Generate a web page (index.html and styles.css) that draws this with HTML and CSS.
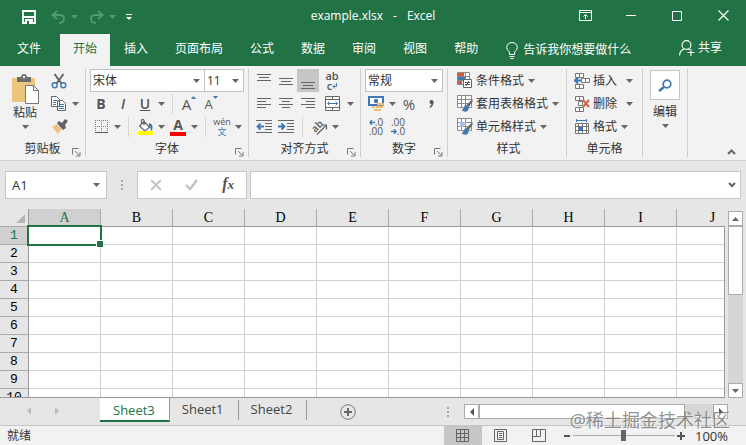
FILE: index.html
```
<!DOCTYPE html>
<html lang="zh-CN">
<head>
    <meta charset="utf-8">
    <meta name="viewport" content="width=device-width, initial-scale=1">
    <title>example.xlsx - Excel</title>
    <link rel="stylesheet" href="styles.css">
</head>
<body>
<svg class="defs" aria-hidden="true">
    <symbol id="caret" viewBox="0 0 7 4"><path d="M0 0h7L3.500 4z" fill="currentColor"/></symbol>
    <symbol id="launch" viewBox="0 0 9 9"><path d="M.5 6.500V.5H6.500M3 3l4 4M8 4v4H4" fill="none" stroke="#777"/></symbol>
    <symbol id="brush" viewBox="0 0 17 17"><path d="M1.500.5h14v12h-14zM1.500 4.500h14M1.500 8.500h14M5.500.5v12M9.500.5v12" fill="#fff" stroke="#8a8a8a"/><path d="M16.500 4l-6 6 2 2.500 4-6z" fill="#666"/><path d="M10.500 10c-3 0-2 4-5 5 3 3 8 2 7-2.500z" fill="#3f78b5"/></symbol>
</svg>

<header class="titlebar">
    <div class="quick">
        <button class="q-btn" aria-label="保存"><svg width="14" height="14" viewBox="0 0 14 14"><path d="M1 1h12v12H1zM1 7h12" fill="none" stroke="#fff" stroke-width="1.800"/><path d="M3 9h8v5H3z" fill="#fff"/><path d="M5 11h2v3H5z" fill="#217346"/></svg></button>
        <button class="q-btn faded" aria-label="撤消"><svg width="15" height="14" viewBox="0 0 15 14"><path d="M6 1L1.500 5 6 9M2 5h7c6 0 5 8-1 8" fill="none" stroke="currentColor" stroke-width="2"/></svg></button>
        <svg class="caret faded"><use href="#caret"/></svg>
        <button class="q-btn faded" aria-label="恢复"><svg width="15" height="14" viewBox="0 0 15 14"><path d="M9 1l4.500 4L9 9M13 5H6c-6 0-5 8 1 8" fill="none" stroke="currentColor" stroke-width="2"/></svg></button>
        <svg class="caret faded"><use href="#caret"/></svg>
        <button class="q-btn" aria-label="自定义"><svg width="6" height="7" viewBox="0 0 6 7"><path d="M0 0h6v1H0zM0 3h6L3 6z" fill="#fff"/></svg></button>
    </div>
    <div class="doc-name"><span>example.xlsx</span><span>-</span><span>Excel</span></div>
    <div class="win-btns">
        <button aria-label="功能区显示选项"><svg width="13" height="11" viewBox="0 0 13 11"><path d="M.5.5h12v10H.5zM.5 2.500h12M6.500 9V4.500M4.500 6.500l2-2 2 2" fill="none" stroke="#fff"/></svg></button>
        <button aria-label="最小化"><svg width="10" height="10" viewBox="0 0 10 10"><path d="M0 4.500h10" stroke="#fff"/></svg></button>
        <button aria-label="最大化"><svg width="10" height="10" viewBox="0 0 10 10"><path d="M.5.5h9v9h-9z" fill="none" stroke="#fff"/></svg></button>
        <button aria-label="关闭"><svg width="11" height="11" viewBox="0 0 11 11"><path d="M.5.5l10 10M10.500.5l-10 10" stroke="#fff" stroke-width="1.200"/></svg></button>
    </div>
</header>

<nav class="menu">
    <a class="tab file" href="#">文件</a>
    <a class="tab active" href="#">开始</a>
    <a class="tab" href="#">插入</a>
    <a class="tab" href="#">页面布局</a>
    <a class="tab" href="#">公式</a>
    <a class="tab" href="#">数据</a>
    <a class="tab" href="#">审阅</a>
    <a class="tab" href="#">视图</a>
    <a class="tab" href="#">帮助</a>
    <a class="tell" href="#"><svg width="12" height="17" viewBox="0 0 12 17"><path d="M3.500 12.500V11C3.500 9 .7 8 .7 5.500a5.300 5 0 0 1 10.600 0C11.300 8 8.500 9 8.500 11v1.500zM3.500 14.500h5M4.500 16.500h3" fill="none" stroke="#fff"/></svg>告诉我你想要做什么</a>
    <a class="share" href="#"><svg width="16" height="16" viewBox="0 0 16 16"><circle cx="7.500" cy="5" r="4.400" fill="none" stroke="#fff" stroke-width="1.100"/><path d="M.6 15.500c0-3 1.500-5.500 4.500-6.500M9.500 9l1 1M12 9v7M8.500 12.500h7" fill="none" stroke="#fff" stroke-width="1.100"/></svg>共享</a>
</nav>

<section class="ribbon">
    <div class="group">
        <div class="tools cols">
            <button class="big">
                <svg width="30" height="32" viewBox="0 0 30 32"><path d="M2 5h23v24H2z" fill="#edc57e"/><path d="M7 9V4h4c0-4 6-4 6 0h4v5z" fill="#6b6b6b"/><circle cx="14" cy="4" r="1.200" fill="#fff"/><path d="M15.500 12.500h8l5 5v13h-13z" fill="#fff" stroke="#777"/><path d="M23.500 12.500v5h5" fill="none" stroke="#777"/></svg>
                <span>粘贴</span>
                <svg class="caret"><use href="#caret"/></svg>
            </button>
            <div class="stack">
                <div class="row"><button class="ico" aria-label="剪切"><svg width="16" height="16" viewBox="0 0 16 16"><path d="M3.500 1l7 9.500M12.500 1l-7 9.500" stroke="#666" stroke-width="2"/><circle cx="3.700" cy="12.300" r="2.500" fill="none" stroke="#3f78b5" stroke-width="1.400"/><circle cx="12.300" cy="12.300" r="2.500" fill="none" stroke="#3f78b5" stroke-width="1.400"/></svg></button></div>
                <div class="row"><button class="ico" aria-label="复制"><svg width="16" height="15" viewBox="0 0 16 15"><path d="M.5.5h5l3 3v7h-8zM6.500 4.500h5l3 3v7h-8z" fill="#fff" stroke="#666"/><path d="M2 4.500h4M2 6.500h3M2 8.500h3M8 8.500h5M8 10.500h5M8 12.500h5" stroke="#3f78b5"/></svg></button><svg class="caret"><use href="#caret"/></svg></div>
                <div class="row"><button class="ico" aria-label="格式刷"><svg width="17" height="15" viewBox="0 0 17 15"><path d="M1 8l5-3 5 5-4 5z" fill="#edc08a"/><path d="M6 4l2-2 3 2 3-4 3 2-3 4 1 3-3 2z" fill="#606060"/></svg></button></div>
            </div>
        </div>
        <div class="label">剪贴板<svg class="launch"><use href="#launch"/></svg></div>
    </div>

    <div class="group">
        <div class="tools">
            <div class="row">
                <div class="pick font-name"><select aria-label="字体"><option>宋体</option></select><svg class="caret"><use href="#caret"/></svg></div>
                <div class="pick font-size"><select aria-label="字号"><option>11</option></select><svg class="caret"><use href="#caret"/></svg></div>
            </div>
            <div class="row">
                <button class="ico"><b>B</b></button>
                <button class="ico"><i>I</i></button>
                <button class="ico"><u>U</u></button>
                <svg class="caret"><use href="#caret"/></svg>
                <span class="sep"></span>
                <button class="ico grow">A<svg width="5" height="3" viewBox="0 0 5 3"><path d="M0 3h5L2.500 0z" fill="#3f78b5"/></svg></button>
                <button class="ico shrink">A<svg width="5" height="3" viewBox="0 0 5 3"><path d="M0 0h5L2.500 3z" fill="#3f78b5"/></svg></button>
            </div>
            <div class="row">
                <button class="ico" aria-label="边框"><svg width="13" height="13" viewBox="0 0 13 13"><path d="M.5 0v12M6.500 0v12M12.500 0v12M0 .5h13M0 6.500h13" stroke="#777" stroke-dasharray="1 1"/><path d="M0 12.500h13" stroke="#555"/></svg></button>
                <svg class="caret"><use href="#caret"/></svg>
                <span class="sep"></span>
                <button class="ico" aria-label="填充颜色"><svg width="17" height="16" viewBox="0 0 17 16"><path d="M7 2.500l5.500 5.500-4.500 4-5.500-5zM7 6V1.500c0-1.500-2.500-1.500-2.500 0V5" fill="#fff" stroke="#666" stroke-width="1.200"/><path d="M12 4c4 1 4 4 3 8-2-1-1-4-3-5z" fill="#3f78b5"/><path d="M1 12h15v4H1z" fill="#ff0"/></svg></button>
                <svg class="caret"><use href="#caret"/></svg>
                <button class="ico color">A</button>
                <svg class="caret"><use href="#caret"/></svg>
                <span class="sep"></span>
                <button class="ico pinyin"><span>wén</span><span class="wen">文</span></button>
                <svg class="caret"><use href="#caret"/></svg>
            </div>
        </div>
        <div class="label">字体<svg class="launch"><use href="#launch"/></svg></div>
    </div>

    <div class="group">
        <div class="tools">
            <div class="row">
                <button class="ico" aria-label="顶端对齐"><svg width="14" height="16" viewBox="0 0 14 16"><path d="M0 1.500h14M2 4.500h10M0 7.500h14" stroke="#666"/></svg></button>
                <button class="ico" aria-label="垂直居中"><svg width="14" height="16" viewBox="0 0 14 16"><path d="M0 5.500h14M2 8.500h10M0 11.500h14" stroke="#666"/></svg></button>
                <button class="ico on" aria-label="底端对齐"><svg width="14" height="16" viewBox="0 0 14 16"><path d="M0 9.500h14M2 12.500h10M0 15.500h14" stroke="#666"/></svg></button>
                <button class="ico wide wrap"><span>ab</span><span>c<svg width="5" height="6" viewBox="0 0 5 6"><path d="M4.500 0v3.500H1M3 1.500l-2 2 2 2" fill="none" stroke="#3f78b5"/></svg></span></button>
            </div>
            <div class="row">
                <button class="ico" aria-label="左对齐"><svg width="14" height="12" viewBox="0 0 14 12"><path d="M0 .5h14M0 3.500h9M0 6.500h14M0 9.500h9" stroke="#666"/></svg></button>
                <button class="ico" aria-label="居中"><svg width="14" height="12" viewBox="0 0 14 12"><path d="M0 .5h14M3 3.500h8M0 6.500h14M3 9.500h8" stroke="#666"/></svg></button>
                <button class="ico" aria-label="右对齐"><svg width="14" height="12" viewBox="0 0 14 12"><path d="M0 .5h14M5 3.500h9M0 6.500h14M5 9.500h9" stroke="#666"/></svg></button>
                <button class="ico wide" aria-label="合并后居中"><svg width="15" height="15" viewBox="0 0 15 15"><path d="M.5.5h14v14H.5zM.5 3.500h14M.5 11.500h14M7.500.5v3M7.500 11.500v3" fill="#fff" stroke="#666"/><path d="M3 7.500h9M4.500 5.500l-2 2 2 2M10.500 5.500l2 2-2 2" fill="none" stroke="#3f78b5"/></svg></button>
                <svg class="caret"><use href="#caret"/></svg>
            </div>
            <div class="row">
                <button class="ico" aria-label="减少缩进"><svg width="16" height="13" viewBox="0 0 16 13"><path d="M0 .5h16M9 3.500h7M9 6.500h7M9 9.500h7M0 12.500h16" stroke="#666"/><path d="M8 6.500H2M4.500 3.500l-3 3 3 3" fill="none" stroke="#3f78b5" stroke-width="1.800"/></svg></button>
                <button class="ico" aria-label="增加缩进"><svg width="16" height="13" viewBox="0 0 16 13"><path d="M0 .5h16M9 3.500h7M9 6.500h7M9 9.500h7M0 12.500h16" stroke="#666"/><path d="M0 6.500h6M3.500 3.500l3 3-3 3" fill="none" stroke="#3f78b5" stroke-width="1.800"/></svg></button>
                <span class="sep"></span>
                <button class="ico" aria-label="方向"><svg class="turn" width="17" height="16" viewBox="0 0 17 16"><text class="slant" x="1" y="12" transform="rotate(-45 5 9)">ab</text><path d="M6 15.500l9-9M11 6h4.500v4.500" fill="none" stroke="#666" stroke-width="1.200"/></svg></button>
                <svg class="caret"><use href="#caret"/></svg>
            </div>
        </div>
        <div class="label">对齐方式<svg class="launch"><use href="#launch"/></svg></div>
    </div>

    <div class="group">
        <div class="tools">
            <div class="row">
                <div class="pick num"><select aria-label="数字格式"><option>常规</option></select><svg class="caret"><use href="#caret"/></svg></div>
            </div>
            <div class="row">
                <button class="ico" aria-label="会计数字格式"><svg width="17" height="17" viewBox="0 0 17 17"><path d="M1 2h14v8H1z" fill="#fff" stroke="#3f78b5" stroke-width="2"/><circle cx="8" cy="6" r="2.200" fill="#3f78b5"/><path d="M9 8h7v2.500H9zM8 11h7v2H8zM6 14h7v2H6zM4 11h3v2H4z" fill="#e8bd72"/></svg></button>
                <svg class="caret"><use href="#caret"/></svg>
                <button class="ico percent">%</button>
                <button class="ico comma" aria-label="千位分隔样式"><svg width="5" height="8" viewBox="0 0 5 8"><circle cx="2.500" cy="2" r="2" fill="#555"/><path d="M4.500 2q0 4-3.500 6l-.5-1Q3 5 2.500 3z" fill="#555"/></svg></button>
            </div>
            <div class="row">
                <button class="ico dec"><span><svg width="6" height="5" viewBox="0 0 6 5"><path d="M6 2.500H1M3 0L.8 2.500 3 5" fill="none" stroke="#3f78b5" stroke-width="1.300"/></svg>.0</span><span>.00</span></button>
                <button class="ico dec"><span>.00</span><span><svg width="6" height="5" viewBox="0 0 6 5"><path d="M0 2.500h5M3 0l2.200 2.500L3 5" fill="none" stroke="#3f78b5" stroke-width="1.300"/></svg>.0</span></button>
            </div>
        </div>
        <div class="label">数字<svg class="launch"><use href="#launch"/></svg></div>
    </div>

    <div class="group styles">
        <div class="tools">
            <div class="row"><button class="line"><svg width="17" height="17" viewBox="0 0 17 17"><path d="M1.500.5h12v12h-12zM1.500 4.500h12M1.500 8.500h12M5.500.5v12M9.500.5v12" fill="#fff" stroke="#8a8a8a"/><path d="M2 1h6v3H2zM2 9h4v3H2z" fill="#d3573a"/><path d="M2 5h7v3H2z" fill="#3f78b5"/><path d="M7.500 7.500h8v8h-8z" fill="#fff" stroke="#666"/><path d="M9 10.500h5M9 12.500h5M13 9l-3 5" stroke="#555"/></svg>条件格式<svg class="caret"><use href="#caret"/></svg></button></div>
            <div class="row"><button class="line"><svg width="17" height="17"><use href="#brush"/></svg>套用表格格式<svg class="caret"><use href="#caret"/></svg></button></div>
            <div class="row"><button class="line"><svg width="17" height="17" viewBox="0 0 17 17"><use href="#brush"/><path d="M4 4h7l-4 5H4z" fill="#a9c3e6"/></svg>单元格样式<svg class="caret"><use href="#caret"/></svg></button></div>
        </div>
        <div class="label">样式</div>
    </div>

    <div class="group cells">
        <div class="tools">
            <div class="row"><button class="line split"><svg width="16" height="16" viewBox="0 0 16 16"><path d="M1.500.5h8v4h-8zM5.500.5v4M1.500 11.500h8v4h-8zM5.500 11.500v4M7.500 5.500h8v4h-8zM11.500 5.500v4" fill="#fff" stroke="#777"/><path d="M7 7.500H1M4 4.500l-3 3 3 3" fill="none" stroke="#3f78b5" stroke-width="2"/></svg>插入<svg class="caret"><use href="#caret"/></svg></button></div>
            <div class="row"><button class="line split"><svg width="16" height="16" viewBox="0 0 16 16"><path d="M1.500.5h8v4h-8zM5.500.5v4M1.500 11.500h8v4h-8zM5.500 11.500v4M4.500 5.500h4v4h-4z" fill="#fff" stroke="#777"/><path d="M9 4l6 7M15 4l-6 7" stroke="#d9604a" stroke-width="2"/></svg>删除<svg class="caret"><use href="#caret"/></svg></button></div>
            <div class="row"><button class="line"><svg width="16" height="16" viewBox="0 0 16 16"><path d="M1.500 4.500h13v10h-13zM1.500 7.500h13M1.500 11.500h13M4.500 4.500v10M8.500 4.500v10M12.500 4.500v10" fill="#fff" stroke="#777"/><path d="M5 8h4v4H5z" fill="#3f78b5"/><path d="M3 1.500h9M2.500 0v3M12.500 0v3" stroke="#3f78b5"/></svg>格式<svg class="caret"><use href="#caret"/></svg></button></div>
        </div>
        <div class="label">单元格</div>
    </div>

    <div class="group edit">
        <button class="big">
            <span class="tile"><svg width="14" height="13" viewBox="0 0 14 13"><circle cx="9" cy="5" r="3.800" fill="none" stroke="#3f78b5" stroke-width="1.700"/><path d="M6 8l-5 4" stroke="#3f78b5" stroke-width="2.500"/></svg></span>
            <span>编辑</span>
            <svg class="caret"><use href="#caret"/></svg>
        </button>
    </div>
    <button class="collapse" aria-label="折叠功能区"><svg width="9" height="6" viewBox="0 0 9 6"><path d="M1 5l3.500-3.500L8 5" fill="none" stroke="#666" stroke-width="2"/></svg></button>
</section>

<section class="formula">
    <div class="name-box"><input aria-label="名称框" value="A1"><svg class="caret"><use href="#caret"/></svg></div>
    <span class="dots"></span>
    <div class="fx">
        <button aria-label="取消"><svg width="12" height="12" viewBox="0 0 12 12"><path d="M1 1l10 10M11 1L1 11" stroke="#c2c2c2" stroke-width="1.800"/></svg></button>
        <button aria-label="输入"><svg width="13" height="12" viewBox="0 0 13 12"><path d="M1 6l4 4 7-9" fill="none" stroke="#c2c2c2" stroke-width="2.400"/></svg></button>
        <button class="fx-name"><i>f<small>x</small></i></button>
    </div>
    <div class="entry"><input aria-label="编辑栏"><svg width="8" height="6" viewBox="0 0 8 6"><path d="M1 1l3 3 3-3" fill="none" stroke="#666" stroke-width="2"/></svg></div>
</section>

<main class="sheet">
    <div class="grid">
        <table>
            <thead>
                <tr><th class="corner"><svg width="9" height="9" viewBox="0 0 9 9"><path d="M9 0v9H0z" fill="#b5b5b5"/></svg></th><th class="cur">A</th><th>B</th><th>C</th><th>D</th><th>E</th><th>F</th><th>G</th><th>H</th><th>I</th><th>J</th></tr>
            </thead>
            <tbody>
                <tr><th class="cur">1</th><td class="picked"></td><td></td><td></td><td></td><td></td><td></td><td></td><td></td><td></td><td></td></tr>
                <tr><th>2</th><td></td><td></td><td></td><td></td><td></td><td></td><td></td><td></td><td></td><td></td></tr>
                <tr><th>3</th><td></td><td></td><td></td><td></td><td></td><td></td><td></td><td></td><td></td><td></td></tr>
                <tr><th>4</th><td></td><td></td><td></td><td></td><td></td><td></td><td></td><td></td><td></td><td></td></tr>
                <tr><th>5</th><td></td><td></td><td></td><td></td><td></td><td></td><td></td><td></td><td></td><td></td></tr>
                <tr><th>6</th><td></td><td></td><td></td><td></td><td></td><td></td><td></td><td></td><td></td><td></td></tr>
                <tr><th>7</th><td></td><td></td><td></td><td></td><td></td><td></td><td></td><td></td><td></td><td></td></tr>
                <tr><th>8</th><td></td><td></td><td></td><td></td><td></td><td></td><td></td><td></td><td></td><td></td></tr>
                <tr><th>9</th><td></td><td></td><td></td><td></td><td></td><td></td><td></td><td></td><td></td><td></td></tr>
                <tr><th>10</th><td></td><td></td><td></td><td></td><td></td><td></td><td></td><td></td><td></td><td></td></tr>
            </tbody>
        </table>
    </div>
    <div class="vscroll">
        <button aria-label="向上滚动"><svg class="up"><use href="#caret"/></svg></button>
        <div class="track"><div class="thumb"></div></div>
        <button aria-label="向下滚动"><svg><use href="#caret"/></svg></button>
    </div>
</main>

<div class="sheets">
    <div class="arrows">
        <button aria-label="上一个工作表"><svg width="4" height="8" viewBox="0 0 4 8"><path d="M4 0v8L0 4z" fill="#bbb"/></svg></button>
        <button aria-label="下一个工作表"><svg width="4" height="8" viewBox="0 0 4 8"><path d="M0 0v8l4-4z" fill="#bbb"/></svg></button>
    </div>
    <a class="sheet-tab open" href="#">Sheet3</a>
    <a class="sheet-tab" href="#">Sheet1</a>
    <a class="sheet-tab" href="#">Sheet2</a>
    <button class="add" aria-label="新工作表"><svg width="16" height="16" viewBox="0 0 16 16"><circle cx="8" cy="8" r="7.300" fill="none" stroke="#777"/><path d="M8 4v8M4 8h8" stroke="#666" stroke-width="2"/></svg></button>
    <span class="dots"></span>
    <div class="hscroll">
        <button aria-label="向左滚动"><svg width="4" height="8" viewBox="0 0 4 8"><path d="M4 0v8L0 4z" fill="#555"/></svg></button>
        <div class="track"><div class="thumb"></div></div>
        <button aria-label="向右滚动"><svg width="4" height="8" viewBox="0 0 4 8"><path d="M0 0v8l4-4z" fill="#555"/></svg></button>
    </div>
</div>

<footer class="status">
    <span class="ready">就绪</span>
    <div class="views">
        <button class="view on" aria-label="普通"><svg width="13" height="13" viewBox="0 0 13 13"><path d="M.5.5h12v12H.5zM.5 4.500h12M.5 8.500h12M4.500.5v12M8.500.5v12" fill="none" stroke="#666"/></svg></button>
        <button class="view" aria-label="页面布局"><svg width="13" height="13" viewBox="0 0 13 13"><path d="M.5.5h12v12H.5zM3.500 2.500h6v8h-6zM5 4.500h3M5 6.500h3M5 8.500h3" fill="none" stroke="#666"/></svg></button>
        <button class="view" aria-label="分页预览"><svg width="14" height="13" viewBox="0 0 14 13"><path d="M.5.5h13v12H.5zM4.500.5v7M8.500.5v7M.5 7.500h8" fill="none" stroke="#666"/></svg></button>
    </div>
    <button class="step" aria-label="缩小"><svg width="8" height="8" viewBox="0 0 8 8"><path d="M1 4h6" stroke="#555" stroke-width="2"/></svg></button>
    <input class="zoom" type="range" min="0" max="100" value="50" aria-label="缩放">
    <button class="step" aria-label="放大"><svg width="8" height="8" viewBox="0 0 8 8"><path d="M0 4h8M4 0v8" stroke="#555" stroke-width="2"/></svg></button>
    <span class="pct">100%</span>
</footer>
<div class="mark">@稀土掘金技术社区</div>
</body>
</html>
```

FILE: styles.css
```
*{
    box-sizing: border-box;
}
body{
    margin: 0;
    height: 100vh;
    display: flex;
    flex-direction: column;
    position: relative;
    overflow: hidden;
    background-color: #e6e6e6;
    color: #333;
    font-family: "Open Sans", "Noto Sans CJK SC", sans-serif;
    font-size: 12px;
    line-height: 16px;
}
button, input, select{
    font: inherit;
    color: inherit;
    background: none;
    border: none;
    padding: 0;
    margin: 0;
    outline: none;
    border-radius: 0;
}
button{
    display: flex;
    align-items: center;
    justify-content: center;
}
a{
    color: inherit;
    text-decoration: none;
}
svg{
    flex: none;
    display: block;
}
.defs{
    width: 0;
    height: 0;
    position: absolute;
}
.caret{
    width: 11px;
    height: 4px;
    color: #666;
}

/* title bar */
.titlebar{
    height: 34px;
    flex: none;
    display: grid;
    grid-template-columns: 1fr auto 1fr;
    background-color: #217346;
    color: #fff;
}
.quick{
    display: flex;
    align-items: center;
    padding-left: 18px;
}
.q-btn{
    width: 22px;
    height: 24px;
    margin-right: 2px;
}
.q-btn.faded{
    margin: 0 0 0 5px;
}
.faded{
    color: #4f9a70;
}
.doc-name{
    display: flex;
    gap: 10px;
    line-height: 32px;
}
.win-btns{
    display: flex;
    justify-content: flex-end;
}
.win-btns button{
    width: 46px;
    height: 31px;
}

/* menu tabs */
.menu{
    height: 32px;
    flex: none;
    display: flex;
    gap: 1px;
    padding: 0 24px 0 4px;
    background-color: #217346;
    color: #fff;
    line-height: 30px;
}
.tab{
    padding: 0 13px;
}
.tab.file{
    margin-right: 5px;
}
.tab.active{
    background-color: #f2f2f2;
    color: #217346;
}
.tell, .share{
    display: flex;
    align-items: center;
    gap: 5px;
}
.tell{
    margin-left: 14px;
}
.share{
    margin-left: auto;
    gap: 3px;
    line-height: 28px;
    align-self: flex-start;
}

/* ribbon */
.ribbon{
    height: 95px;
    flex: none;
    display: flex;
    padding-top: 3px;
    background-color: #f2f2f2;
    border-bottom: 1px solid #cfcfcf;
}
.group{
    display: flex;
    flex-direction: column;
    padding: 0 4px;
    height: 88px;
    border-right: 1px solid #cfcfcf;
}
.tools.cols{
    display: flex;
}
.stack{
    padding-left: 2px;
}
.row{
    height: 23px;
    display: flex;
    align-items: center;
}
.label{
    flex: 1;
    display: flex;
    align-items: flex-end;
    justify-content: center;
    position: relative;
}
.launch{
    width: 9px;
    height: 9px;
    position: absolute;
    right: 0;
    bottom: 0;
}
.big{
    flex-direction: column;
    justify-content: flex-start;
    width: 42px;
    padding-top: 4px;
}
.big .caret{
    margin-top: 4px;
}
.ico{
    width: 22px;
    height: 23px;
    font-size: 14px;
    color: #555;
}
.ico i, .ico u{
    font-weight: 600;
}
.ico.wide{
    width: 26px;
}
.ico.on{
    background-color: #c6c6c6;
}
.sep{
    width: 1px;
    height: 20px;
    margin: 0 5px;
    background-color: #d5d5d5;
}
.pick{
    height: 23px;
    display: flex;
    align-items: center;
    border: 1px solid #c0c0c0;
    background-color: #fff;
}
.pick .caret{
    margin-right: 2px;
}
.pick select{
    flex: 1;
    min-width: 0;
    appearance: none;
    padding-left: 2px;
}
.font-name{
    width: 115px;
}
.font-size{
    width: 40px;
    margin-left: -1px;
}
.num{
    width: 78px;
}
.grow, .shrink{
    align-items: flex-start;
    font-size: 15px;
    line-height: 24px;
}
.shrink{
    font-size: 13px;
}
.grow svg, .shrink svg{
    margin-top: 4px;
}
.color{
    height: 18px;
    border-bottom: 4px solid #f00;
    width: 16px;
    margin: 0 3px;
    font-weight: bold;
    line-height: 14px;
}
.pinyin, .wrap, .dec{
    flex-direction: column;
    font-size: 10px;
    line-height: 9px;
}
.pinyin{
    font-size: 9px;
    line-height: 10px;
}
.wen{
    color: #3f78b5;
}
.wrap{
    font-weight: 600;
    font-size: 11px;
    line-height: 10px;
}
.wrap span, .dec span{
    display: flex;
    align-items: center;
}
.turn{
    overflow: visible;
}
.slant{
    font-size: 10px;
    font-weight: 600;
    fill: #555;
}
.percent{
    font-size: 15px;
}
.line{
    gap: 3px;
}
.line .caret{
    margin-left: -1px;
}
.line.split .caret{
    margin-left: 4px;
}
.styles{
    padding: 0 5px 0 8px;
}
.cells{
    padding: 0 7px;
}
.edit{
    padding: 0 1px;
}
.edit .big{
    padding-top: 1px;
}
.tile{
    width: 30px;
    height: 30px;
    margin-bottom: 4px;
    display: flex;
    align-items: center;
    justify-content: center;
    border: 1px solid #c6c6c6;
    background-color: #fff;
}
.collapse{
    margin: auto 10px 5px auto;
}

/* formula bar */
.formula{
    height: 48px;
    flex: none;
    display: flex;
    align-items: center;
    padding: 0 5px 1px;
}
.name-box, .fx, .entry{
    height: 28px;
    display: flex;
    align-items: center;
    background-color: #fff;
    border: 1px solid #c6c6c6;
}
.name-box{
    width: 102px;
    padding: 0 4px 0 6px;
    font-size: 13px;
}
.name-box input{
    flex: 1;
    min-width: 0;
}
.dots{
    width: 2px;
    height: 10px;
    background: repeating-linear-gradient(#aaa 0 2px, transparent 2px 4px);
}
.formula .dots{
    margin: 0 14px;
}
.fx{
    width: 110px;
    justify-content: space-around;
    margin-right: 3px;
}
.fx-name{
    font-family: "Liberation Serif", serif;
    font-size: 16px;
    font-weight: bold;
    color: #555;
}
.entry{
    flex: 1;
    padding-right: 4px;
}
.entry input{
    flex: 1;
    min-width: 0;
}

/* cells */
.sheet{
    flex: 1;
    min-height: 0;
    display: flex;
}
.grid{
    flex: 1;
    min-width: 0;
    overflow: hidden;
    position: relative;
    border-bottom: 1px solid #999;
}
.grid::after{
    content: "";
    position: absolute;
    top: 17px;
    right: 0;
    bottom: 0;
    border-right: 1px solid #999;
}
table{
    width: max-content;
    border-spacing: 0;
}
th, td{
    height: 18px;
    padding: 0;
    min-width: 72px;
    border-right: 1px solid #d0d0d0;
    border-bottom: 1px solid #d0d0d0;
}
td{
    background-color: #fff;
}
th{
    color: #000;
    font-family: "Liberation Serif", serif;
    font-size: 14px;
    font-weight: normal;
    line-height: 17px;
}
thead th{
    border-right-color: #aaa;
    border-bottom-color: #999;
}
tbody th, .corner{
    min-width: 29px;
    font-family: "Liberation Mono", monospace;
    font-size: 13px;
    border-right-color: #999;
    border-bottom-color: #aaa;
}
.corner svg{
    margin: 2px 3px 0 auto;
}
.cur{
    background-color: #d0d0d0;
    color: #217346;
}
.picked{
    position: relative;
}
.picked::before{
    content: "";
    position: absolute;
    inset: -2px;
    border: 2px solid #217346;
}
.picked::after{
    content: "";
    position: absolute;
    right: -3px;
    bottom: -3px;
    width: 6px;
    height: 6px;
    background-color: #217346;
    border: solid #fff;
    border-width: 1px 0 0 1px;
}

/* scroll bars */
.vscroll{
    width: 15px;
    margin: 2px 3px 0;
    display: flex;
    flex-direction: column;
}
.vscroll button, .hscroll button, .thumb{
    background-color: #fff;
    border: 1px solid #ababab;
}
.vscroll button, .hscroll button{
    width: 15px;
    height: 15px;
    flex: none;
}
.vscroll svg{
    width: 7px;
    height: 4px;
    color: #666;
}
.vscroll .up{
    transform: rotate(180deg);
}
.track{
    flex: 1;
    background-color: #d6d6d6;
}
.vscroll .thumb{
    height: 44%;
}
.hscroll{
    flex: 0 1 264px;
    display: flex;
    margin: 0 18px 0 15px;
}
.hscroll .thumb{
    width: 88%;
    height: 15px;
}

/* sheet tabs */
.sheets{
    height: 28px;
    flex: none;
    display: flex;
    align-items: center;
    border-bottom: 1px solid #c6c6c6;
}
.arrows{
    width: 100px;
    flex: none;
    display: flex;
    gap: 24px;
    padding: 0 0 2px 27px;
}
.sheet-tab{
    height: 20px;
    padding: 2px 14px 0 13px;
    margin: 0 0 3px -1px;
    border-right: 1px solid #999;
    color: #444;
    font-size: 13px;
    line-height: 14px;
}
.sheet-tab.open{
    align-self: flex-start;
    height: 25px;
    margin: -1px 0 0;
    padding-top: 6px;
    background-color: #fff;
    color: #217346;
    border-bottom: 2px solid #217346;
}
.add{
    margin-left: 33px;
}
.sheets .dots{
    margin-left: auto;
}

/* status bar */
.status{
    height: 19px;
    flex: none;
    display: flex;
    align-items: center;
    padding: 0 18px 0 7px;
    background-color: #f2f2f2;
}
.ready{
    margin-right: auto;
}
.views{
    display: flex;
    margin-right: 3px;
}
.view{
    width: 38px;
    height: 19px;
}
.view.on{
    background-color: #c6c6c6;
}
.step{
    width: 12px;
    height: 16px;
}
.zoom{
    width: 102px;
    height: 11px;
    appearance: none;
    background: linear-gradient(#aaa, #aaa) center / 100% 1px no-repeat;
}
.zoom::-webkit-slider-thumb{
    appearance: none;
    width: 5px;
    height: 11px;
    background-color: #666;
}
.pct{
    margin-left: 8px;
    font-size: 13px;
}
.mark{
    position: absolute;
    right: 16px;
    bottom: 13px;
    font-size: 18px;
    line-height: 24px;
    color: rgba(110, 110, 110, .75);
    text-shadow: 1px 1px 0 rgba(255, 255, 255, .6);
    pointer-events: none;
}
```
